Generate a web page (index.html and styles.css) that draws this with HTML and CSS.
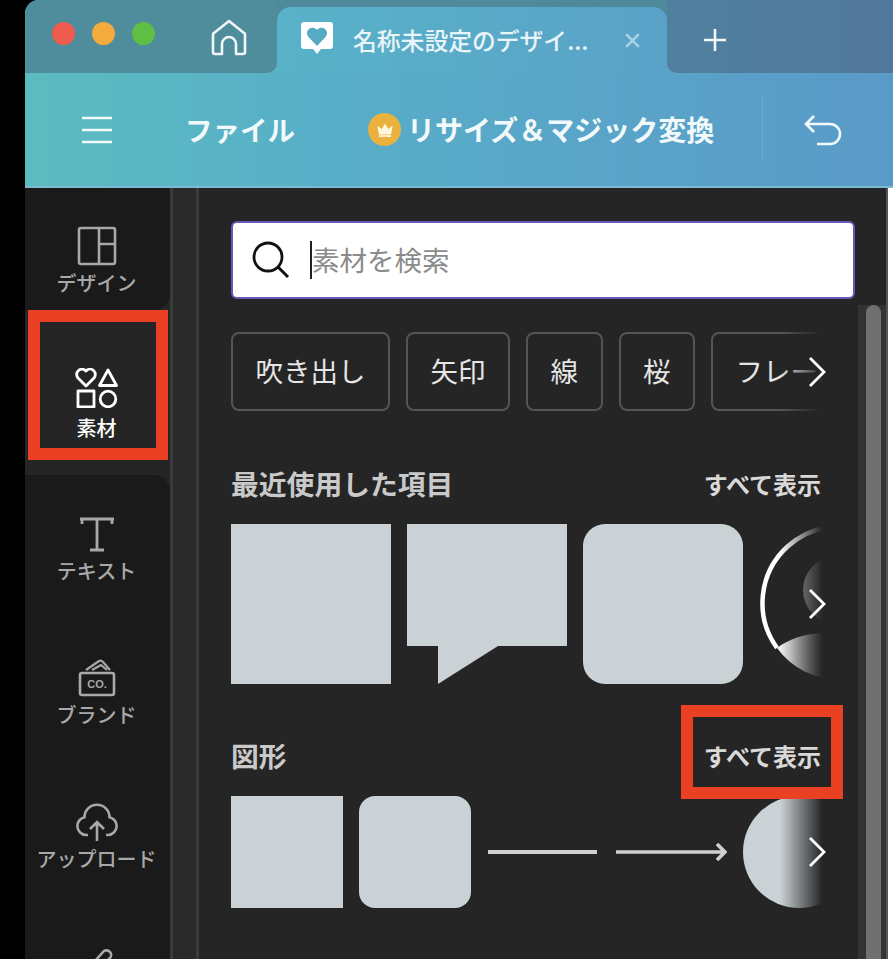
FILE: index.html
```html
<!DOCTYPE html>
<html lang="ja">
<head>
  <meta charset="UTF-8">
  <title>素材 - デザインエディター</title>
  <link rel="stylesheet" href="styles.css">
</head>
<body>

<div class="app">

  <header class="top">
    <!-- Title bar -->
    <div class="titlebar">
      <div class="title-left">
        <div class="lights">
          <span class="light red"></span>
          <span class="light yellow"></span>
          <span class="light green"></span>
        </div>
        <svg class="home" viewBox="0 0 38 38"><path d="M3 33V16a2 2 0 0 1 1-2L19 2l15 12a2 2 0 0 1 1 2v17a2 2 0 0 1-2 2h-7V25a7 7 0 0 0-14 0v10H5a2 2 0 0 1-2-2Z" fill="none" stroke="#eef6f8" stroke-width="2.6" stroke-linejoin="round"/></svg>
      </div>
      <div class="tab-slot">
        <div class="tab">
          <svg class="tab-logo" viewBox="0 0 34 34"><path d="M4 1h26a3 3 0 0 1 3 3v21a3 3 0 0 1-3 3h-9l-4 5-4-5H4a3 3 0 0 1-3-3V4a3 3 0 0 1 3-3Z" fill="#fff"/><path d="M17 25 8 15.500a5.500 5.500 0 0 1 9-6.500 5.500 5.500 0 0 1 9 6.500Z" fill="#55aac4"/></svg>
          <span class="tab-title">名称未設定のデザイ...</span>
          <svg class="tab-close" viewBox="0 0 16 16"><path d="M2 2l12 12M14 2 2 14" stroke="#a9d3e2" stroke-width="2.4"/></svg>
        </div>
      </div>
      <div class="title-right">
        <svg class="plus" viewBox="0 0 24 24"><path d="M12 1v22M1 12h22" stroke="#f2f7fa" stroke-width="2.6"/></svg>
      </div>
    </div>

    <!-- Toolbar -->
    <div class="toolbar">
      <svg class="menu" viewBox="0 0 30 28"><path d="M0 2h30M0 14h30M0 26h30" stroke="#f2f9fa" stroke-width="2.6"/></svg>
      <span class="file">ファイル</span>
      <span class="crown">
        <svg viewBox="0 0 20 20"><path d="M3 6l4 3 3-5 3 5 4-3-1.500 8h-11Z" fill="#fff6dd"/><path d="M4.500 15.500h11" stroke="#fff6dd" stroke-width="1.600"/></svg>
      </span>
      <span class="resize">リサイズ＆マジック変換</span>
      <span class="sep"></span>
      <svg class="undo" viewBox="0 0 38 32"><path d="M10 2 2 10l8 8M2 10h24a9.500 9.500 0 0 1 0 20H13" fill="none" stroke="#f2f9fa" stroke-width="2.6"/></svg>
    </div>
  </header>

  <div class="body">
    <!-- Side rail -->
    <nav class="rail">
      <div class="rail-item first">
        <svg class="rail-icon" viewBox="0 0 44 40"><path d="M6 2h32a2 2 0 0 1 2 2v32a2 2 0 0 1-2 2H6a2 2 0 0 1-2-2V4a2 2 0 0 1 2-2ZM24 2v36M24 18h16" fill="none" stroke="#a8a8a8" stroke-width="2.600" stroke-linejoin="round"/></svg>
        <span>デザイン</span>
      </div>
      <div class="rail-item active">
        <svg class="rail-icon" viewBox="0 0 44 40"><path d="M11 18 3 10a5 5 0 0 1 8-7 5 5 0 0 1 8 7ZM33 2l8.500 15.500h-17ZM3 23h16v16H3Z" fill="none" stroke="#fff" stroke-width="2.800" stroke-linejoin="round"/><circle cx="33" cy="31" r="7.800" fill="none" stroke="#fff" stroke-width="2.800"/></svg>
        <span>素材</span>
      </div>
      <div class="rail-item after-active">
        <svg class="rail-icon" viewBox="0 0 44 40"><path d="M7 10V5h30v5M5 5h6M33 5h6M22 5v31M15 36h14" fill="none" stroke="#a8a8a8" stroke-width="2.800"/></svg>
        <span>テキスト</span>
      </div>
      <div class="rail-item">
        <svg class="rail-icon" viewBox="0 0 44 40"><path d="M11 12 24 3q2-1 4 1l7 8M17 12l9-5 6 5" fill="none" stroke="#a8a8a8" stroke-width="2.200" stroke-linejoin="round"/><rect x="5" y="15" width="34" height="22" rx="2" fill="none" stroke="#a8a8a8" stroke-width="2.600"/><text class="co-text" x="22" y="30" text-anchor="middle">CO.</text></svg>
        <span>ブランド</span>
      </div>
      <div class="rail-item">
        <svg class="rail-icon" viewBox="0 0 44 40"><path d="M13 33H11a9 9 0 0 1-1.500-17.800 12.500 12.500 0 0 1 25 0A9 9 0 0 1 33 33h-2M22 39V21M15 27l7-7 7 7" fill="none" stroke="#a8a8a8" stroke-width="2.600"/></svg>
        <span>アップロード</span>
      </div>
      <div class="rail-item last">
        <svg class="rail-icon" viewBox="0 0 44 40"><path d="M10 32 12 24 28 6a4 4 0 0 1 7 6L18 30Z" fill="none" stroke="#a8a8a8" stroke-width="2.600"/></svg>
      </div>
    </nav>

    <div class="gutter"></div>

    <!-- Elements panel -->
    <main class="panel">
      <div class="panel-content">
        <div class="search">
          <svg class="search-icon" viewBox="0 0 38 38"><circle cx="16" cy="16" r="14" fill="none" stroke="#111" stroke-width="2.800"/><path d="M26 26l10 10" stroke="#111" stroke-width="3"/></svg>
          <span class="caret"></span>
          <span class="placeholder">素材を検索</span>
        </div>

        <div class="row chips">
          <span class="chip">吹き出し</span>
          <span class="chip">矢印</span>
          <span class="chip">線</span>
          <span class="chip">桜</span>
          <span class="chip">フレーム</span>
          <svg class="chevron" viewBox="0 0 18 32"><path d="M2 2l14 14L2 30" fill="none" stroke="#fff" stroke-width="2.800"/></svg>
        </div>

        <div class="section-head first-head">
          <h2>最近使用した項目</h2>
          <span class="see-all">すべて表示</span>
        </div>
        <div class="row tiles">
          <div class="shape big"></div>
          <svg class="big-svg" viewBox="0 0 160 160"><path d="M0 0h160v122H91l-60 38v-38H0Z" fill="#cbd2d6"/></svg>
          <div class="shape big round"></div>
          <svg class="big-svg" viewBox="0 0 160 160">
            <defs>
              <linearGradient id="avatarFill" x1="0" x2="1" y1="0" y2="0">
                <stop offset="0.1" stop-color="#f0f0f0"/>
                <stop offset="0.45" stop-color="#b8b8b8"/>
              </linearGradient>
            </defs>
            <circle cx="78" cy="66" r="34" fill="#b4b4b4"/>
            <path d="M18 124C32 113 52 108 80 108 108 108 128 113 142 124A76.500 76.500 0 0 1 18 124Z" fill="url(#avatarFill)"/>
            <path d="M18 124A76.500 76.500 0 1 1 142 124" fill="none" stroke="#fff" stroke-width="4.500"/>
          </svg>
          <svg class="chevron" viewBox="0 0 18 32"><path d="M2 2l14 14L2 30" fill="none" stroke="#fff" stroke-width="2.800"/></svg>
        </div>

        <div class="section-head">
          <h2>図形</h2>
          <span class="see-all">すべて表示</span>
        </div>
        <div class="row tiles">
          <div class="shape small"></div>
          <div class="shape small round-small"></div>
          <svg class="small-svg" viewBox="0 0 112 112"><path d="M1 56h109" stroke="#cfd0d0" stroke-width="4"/></svg>
          <svg class="small-svg" viewBox="0 0 112 112"><path d="M1 56h109M102 48l8 8-8 8" fill="none" stroke="#cfd0d0" stroke-width="3.600"/></svg>
          <div class="shape small circle"></div>
          <svg class="chevron" viewBox="0 0 18 32"><path d="M2 2l14 14L2 30" fill="none" stroke="#fff" stroke-width="2.800"/></svg>
        </div>
      </div>

      <div class="scrollbar"><div class="thumb"></div></div>
    </main>
  </div>

  <!-- Highlight boxes drawn over the screenshot -->
  <div class="mark mark-rail"></div>
  <div class="mark mark-all"></div>
</div>

</body>
</html>
```

FILE: styles.css
```css
* { box-sizing: border-box; margin: 0; padding: 0; }
html, body { height: 100%; overflow: hidden; background: #000; }
body { font-family: "Noto Sans CJK JP", "Noto Sans", sans-serif; }

.app { position: relative; margin-left: 25px; height: 959px; display: flex; flex-direction: column; border-top-left-radius: 14px; overflow: hidden; background: #252525; }

/* Top gradient area */
.top { height: 188px; flex: none; background: linear-gradient(90deg, #5bbcc0 0%, #58aec8 35%, #5a9ac8 100%); border-bottom: 2px solid #7cb9d2; }

.titlebar { height: 73px; display: flex; }
.title-left { width: 252px; display: flex; align-items: center; background: #4f8d9c; border-bottom-right-radius: 10px; }
.lights { display: flex; gap: 17px; margin-left: 27px; margin-top: -6px; }
.light { width: 23px; height: 23px; border-radius: 50%; }
.red { background: #ef5b4d; }
.yellow { background: #f4aa3c; }
.green { background: #5fbf45; }
.home { width: 38px; height: 38px; margin-left: 55px; margin-top: 2px; }

.tab-slot { width: 390px; background: linear-gradient(#4f8a9c 20px, transparent 20px); }
.tab { height: 66px; margin-top: 7px; display: flex; align-items: center; border-radius: 14px 14px 0 0; background: linear-gradient(90deg, #58b2c8, #5aa2c8); }
.tab-logo { width: 34px; height: 34px; margin-left: 23px; margin-top: -4px; }
.tab-title { margin-left: 19px; font-size: 23.800px; line-height: 32px; font-weight: 500; color: #e9f5f8; white-space: nowrap; width: 245px; }
.tab-close { width: 17px; height: 17px; margin-left: 26px; }

.title-right { flex: 1; display: flex; align-items: center; background: linear-gradient(90deg, #50809e, #52789c); border-bottom-left-radius: 10px; }
.plus { width: 24px; height: 24px; margin-left: 36px; margin-top: 7px; }

.toolbar { height: 113px; display: flex; align-items: center; }
.menu { width: 30px; height: 28px; margin-left: 57px; }
.file { margin-left: 73px; font-size: 27.500px; font-weight: 700; color: #f2f9fa; white-space: nowrap; padding-bottom: 2px; }
.crown { width: 33px; height: 33px; margin-left: 73px; border-radius: 50%; background: #eab23c; display: flex; align-items: center; justify-content: center; }
.crown svg { width: 22px; height: 22px; }
.resize { margin-left: 6px; font-size: 28px; font-weight: 700; color: #f2f9fa; white-space: nowrap; padding-bottom: 2px; }
.sep { width: 1px; height: 64px; margin-left: 48px; background: rgba(255, 255, 255, 0.14); }
.undo { width: 38px; height: 32px; margin-left: 41px; }

.body { flex: 1; display: flex; min-height: 0; background: #fff; }

/* Side rail */
.rail { width: 145px; flex: none; overflow: hidden; background: #252525; }
.rail-item { height: 144px; display: flex; flex-direction: column; align-items: center; justify-content: flex-end; padding: 0 2px 16px 0; background: #1a1a1a; color: #a8a8a8; }
.rail-item span { font-size: 20px; line-height: 22px; font-weight: 500; white-space: nowrap; }
.rail-icon { flex: none; width: 44px; height: 40px; margin-bottom: 6px; }
.rail-item.first { height: 122px; border-bottom-right-radius: 16px; }
.rail-item.active { height: 165px; padding-bottom: 36px; background: #252525; color: #fff; }
.rail-item.active .rail-icon { margin-bottom: 9px; }
.rail-item.after-active { height: 123px; border-top-right-radius: 16px; }
.rail-item.last { justify-content: flex-start; padding-top: 60px; padding-bottom: 0; }
.co-text { font-family: "Liberation Sans", sans-serif; font-size: 11px; font-weight: 700; fill: #a8a8a8; }

.gutter { width: 29px; flex: none; background: #2a2a2a; border-left: 3px solid #3a3a3a; border-right: 3px solid #3c3c3c; }

/* Panel */
.panel { flex: 1; display: flex; background: #252525; min-width: 0; margin-right: 5px; }
.panel-content { width: 659px; flex: none; padding: 33px 0 0 32px; }

.search { width: 624px; height: 78px; display: flex; align-items: center; background: #fff; border: 2px solid #6a55b8; border-radius: 6px; }
.search-icon { width: 38px; height: 38px; margin-left: 19px; }
.caret { width: 2px; height: 38px; margin-left: 20px; background: #222; }
.placeholder { font-size: 27.500px; color: #8b8b8b; white-space: nowrap; padding-bottom: 3px; }

.row { position: relative; width: 595px; display: flex; overflow: hidden; }
.row::after { content: ""; position: absolute; top: 0; right: 0; bottom: 0; width: 46px; background: linear-gradient(90deg, rgba(37, 37, 37, 0), #252525 92%); }

.chips { margin-top: 33px; height: 79px; gap: 16px; }
.chip { flex: none; height: 79px; padding: 0 22.500px 3px; display: flex; align-items: center; font-size: 27.500px; color: #e6e6e6; border: 2px solid #555; border-radius: 8px; white-space: nowrap; }

.chevron { position: absolute; z-index: 1; right: 0; top: 50%; width: 18px; height: 32px; margin-top: -16px; }

.section-head { width: 590px; height: 40px; margin-top: 53px; display: flex; align-items: center; justify-content: space-between; padding-bottom: 4px; }
.first-head { margin-top: 54px; }
.section-head h2 { font-size: 27.800px; font-weight: 700; color: #c9c9c9; }
.see-all { font-size: 24px; font-weight: 700; color: #d8d8d8; white-space: nowrap; }

.tiles { margin-top: 19px; gap: 16px; }
.shape { flex: none; background: #cbd2d6; }
.big { width: 160px; height: 160px; }
.big-svg { flex: none; width: 160px; height: 160px; }
.round { border-radius: 22px; }
.small { width: 112px; height: 112px; }
.small-svg { flex: none; width: 112px; height: 112px; }
.round-small { border-radius: 16px; }
.circle { border-radius: 50%; }

/* Scrollbar */
.scrollbar { flex: 1; padding: 117px 5px 0 8px; background: linear-gradient(#252525 117px, #333 117px); border-right: 2px solid #555; }
.thumb { height: 100%; background: #707070; border-radius: 8px 8px 0 0; }

/* Red annotation boxes */
.mark { position: absolute; border: 12.500px solid #ea4023; }
.mark-rail { left: 3px; top: 310px; width: 140px; height: 150px; }
.mark-all { left: 656px; top: 705px; width: 162px; height: 94px; }
```
